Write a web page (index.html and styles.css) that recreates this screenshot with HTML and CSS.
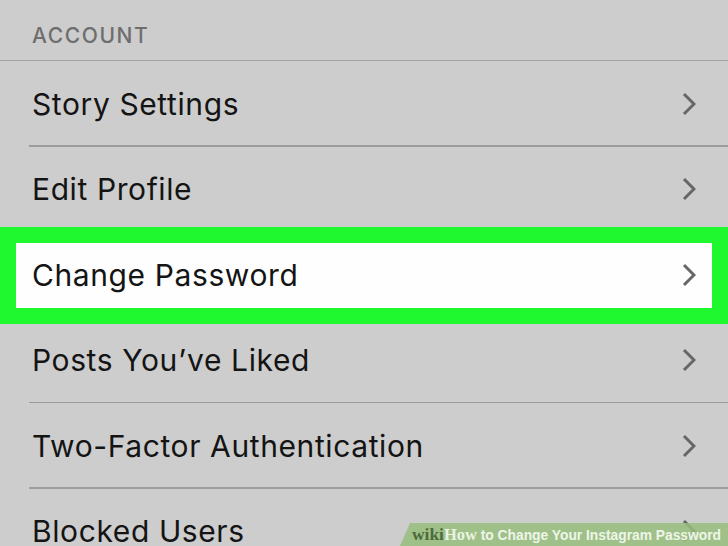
FILE: index.html
```html
<!DOCTYPE html>
<html>
<head>
<meta charset="utf-8">
<link rel="stylesheet" href="styles.css">
</head>
<body>
<div class="screen">
  <div class="section-header">ACCOUNT</div>
  <div class="list">
    <div class="row"><span class="label">Story Settings</span><svg class="chev" viewBox="0 0 14 24"><path d="M2 2 L12 12 L2 22"/></svg></div>
    <div class="row"><span class="label">Edit Profile</span><svg class="chev" viewBox="0 0 14 24"><path d="M2 2 L12 12 L2 22"/></svg></div>
    <div class="row highlight"><span class="label">Change Password</span><svg class="chev" viewBox="0 0 14 24"><path d="M2 2 L12 12 L2 22"/></svg></div>
    <div class="row"><span class="label">Posts You’ve Liked</span><svg class="chev" viewBox="0 0 14 24"><path d="M2 2 L12 12 L2 22"/></svg></div>
    <div class="row"><span class="label">Two-Factor Authentication</span><svg class="chev" viewBox="0 0 14 24"><path d="M2 2 L12 12 L2 22"/></svg></div>
    <div class="row"><span class="label">Blocked Users</span><svg class="chev" viewBox="0 0 14 24"><path d="M2 2 L12 12 L2 22"/></svg></div>
  </div>
  <div class="banner"><span class="wiki">wiki</span><span class="how">How</span><span class="title"> to Change Your Instagram Password</span></div>
</div>
</body>
</html>
```
FILE: styles.css
```css
html, body {
  margin: 0;
  padding: 0;
}
body {
  width: 728px;
  height: 546px;
  overflow: hidden;
  background: #cccccc;
  font-family: "Inter", "Liberation Sans", sans-serif;
}
.screen {
  position: relative;
  width: 728px;
  height: 546px;
  overflow: hidden;
  background: #cdcdcd;
}
.section-header {
  height: 61px;
  box-sizing: border-box;
  padding: 24px 0 0 32px;
  font-size: 21px;
  font-weight: 500;
  letter-spacing: 1.6px;
  color: #6e6e6e;
  line-height: 24px;
  border-bottom: 1.5px solid #a2a2a2;
}
.list {
  display: flex;
  flex-direction: column;
}
.row {
  position: relative;
  height: 85.5px;
  flex: none;
  display: flex;
  align-items: center;
  justify-content: space-between;
  padding: 0 32px 0 32px;
  box-sizing: border-box;
}
.row::after {
  content: "";
  position: absolute;
  left: 29px;
  right: 0;
  bottom: 0;
  height: 1.5px;
  background: #9c9c9c;
}
.label {
  position: relative;
  z-index: 1;
  font-size: 30px;
  color: #141414;
  letter-spacing: 0.6px;
}
.chev {
  position: relative;
  z-index: 1;
  width: 14px;
  height: 24px;
}
.chev path {
  fill: none;
  stroke: #666666;
  stroke-width: 3;
}
.highlight::before {
  content: "";
  position: absolute;
  left: 0;
  right: 0;
  top: -5px;
  bottom: -6px;
  border: 16px solid #1ff72f;
  background: #fefefe;
  z-index: 2;
}
.highlight .label, .highlight .chev {
  z-index: 3;
}
.highlight::after {
  display: none;
}
.banner {
  position: absolute;
  right: 0;
  bottom: 0;
  width: 328px;
  height: 23px;
  background: rgba(150, 190, 125, 0.85);
  clip-path: polygon(10px 0, 100% 0, 100% 100%, 0 100%);
  box-sizing: border-box;
  padding-left: 12px;
  font-size: 13.8px;
  line-height: 23px;
  white-space: nowrap;
  font-weight: bold;
  z-index: 5;
}
.wiki {
  font-family: "Liberation Serif", serif;
  color: #4d6a3c;
  font-size: 17.4px;
}
.how {
  font-family: "Liberation Serif", serif;
  color: #eaf3e0;
  font-size: 16.5px;
}
.title {
  font-family: "Liberation Sans", sans-serif;
  color: #eef5e8;
}
```
